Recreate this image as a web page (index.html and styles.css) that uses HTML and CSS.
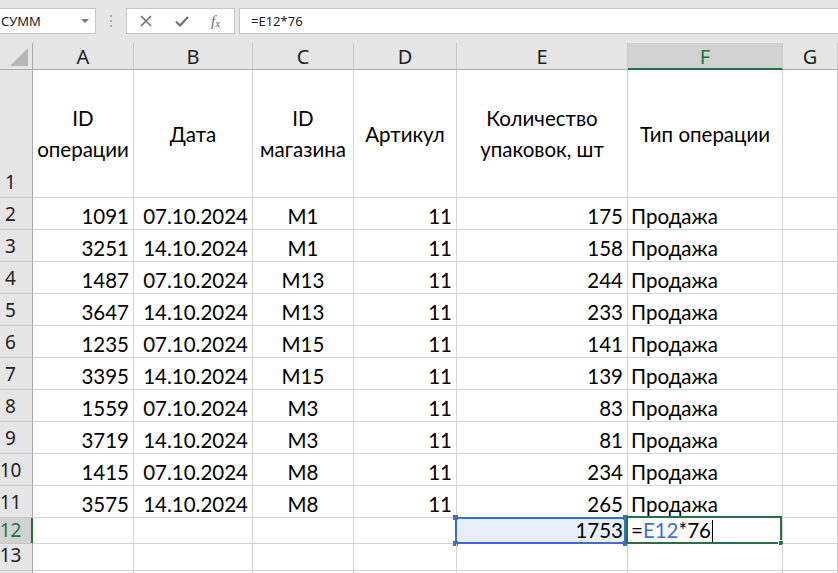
FILE: index.html
```html
<!DOCTYPE html>
<html lang="ru">
<head>
<meta charset="utf-8">
<title>Excel</title>
<link rel="stylesheet" href="styles.css">
</head>
<body>
<div class="toolbar">
  <div class="namebox"><span class="nb-text">СУММ</span><span class="nb-arrow"></span></div>
  <div class="grip"><i></i><i></i><i></i></div>
  <div class="fbtns">
    <svg class="ico" width="12" height="12" viewBox="0 0 12 12"><path d="M1 1 L11 11 M11 1 L1 11" stroke="#707070" stroke-width="1.6" fill="none"/></svg>
    <svg class="ico" width="14" height="11" viewBox="0 0 14 11"><path d="M1 5.5 L5 9.5 L13 1" stroke="#707070" stroke-width="2.2" fill="none"/></svg>
    <span class="fx">f<sub>x</sub></span>
  </div>
  <div class="formula">=E12*76</div>
</div>
<div class="sheet">
  <div class="corner"><span class="tri"></span></div>
  <div class="ch">A</div><div class="ch">B</div><div class="ch">C</div><div class="ch">D</div><div class="ch">E</div><div class="ch sel">F</div><div class="ch">G</div>

  <div class="rh top">1</div>
  <div class="c hd">ID<br>операции</div>
  <div class="c hd">Дата</div>
  <div class="c hd">ID<br>магазина</div>
  <div class="c hd">Артикул</div>
  <div class="c hd">Количество<br>упаковок, шт</div>
  <div class="c hd">Тип операции</div>
  <div class="c"></div>

  <div class="rh">2</div><div class="c r">1091</div><div class="c r">07.10.2024</div><div class="c m">М1</div><div class="c r">11</div><div class="c r">175</div><div class="c l">Продажа</div><div class="c"></div>
  <div class="rh">3</div><div class="c r">3251</div><div class="c r">14.10.2024</div><div class="c m">М1</div><div class="c r">11</div><div class="c r">158</div><div class="c l">Продажа</div><div class="c"></div>
  <div class="rh">4</div><div class="c r">1487</div><div class="c r">07.10.2024</div><div class="c m">М13</div><div class="c r">11</div><div class="c r">244</div><div class="c l">Продажа</div><div class="c"></div>
  <div class="rh">5</div><div class="c r">3647</div><div class="c r">14.10.2024</div><div class="c m">М13</div><div class="c r">11</div><div class="c r">233</div><div class="c l">Продажа</div><div class="c"></div>
  <div class="rh">6</div><div class="c r">1235</div><div class="c r">07.10.2024</div><div class="c m">М15</div><div class="c r">11</div><div class="c r">141</div><div class="c l">Продажа</div><div class="c"></div>
  <div class="rh">7</div><div class="c r">3395</div><div class="c r">14.10.2024</div><div class="c m">М15</div><div class="c r">11</div><div class="c r">139</div><div class="c l">Продажа</div><div class="c"></div>
  <div class="rh">8</div><div class="c r">1559</div><div class="c r">07.10.2024</div><div class="c m">М3</div><div class="c r">11</div><div class="c r">83</div><div class="c l">Продажа</div><div class="c"></div>
  <div class="rh">9</div><div class="c r">3719</div><div class="c r">14.10.2024</div><div class="c m">М3</div><div class="c r">11</div><div class="c r">81</div><div class="c l">Продажа</div><div class="c"></div>
  <div class="rh">10</div><div class="c r">1415</div><div class="c r">07.10.2024</div><div class="c m">М8</div><div class="c r">11</div><div class="c r">234</div><div class="c l">Продажа</div><div class="c"></div>
  <div class="rh">11</div><div class="c r">3575</div><div class="c r">14.10.2024</div><div class="c m">М8</div><div class="c r">11</div><div class="c r">265</div><div class="c l">Продажа</div><div class="c"></div>

  <div class="rh sel">12</div><div class="c"></div><div class="c"></div><div class="c"></div><div class="c"></div>
  <div class="c r ref">1753<span class="rng"><i class="h tl"></i><i class="h tr"></i><i class="h bl"></i><i class="h br"></i></span></div>
  <div class="c l act"><span class="eq">=</span><span class="refc">E12</span>*76<span class="caret"></span><span class="actbox"><i class="gh"></i></span></div>
  <div class="c"></div>

  <div class="rh">13</div><div class="c"></div><div class="c"></div><div class="c"></div><div class="c"></div><div class="c"></div><div class="c"></div><div class="c"></div>
  <div class="rh"></div><div class="c"></div><div class="c"></div><div class="c"></div><div class="c"></div><div class="c"></div><div class="c"></div><div class="c"></div>
</div>
</body>
</html>
```
FILE: styles.css
```css
* { box-sizing: border-box; }
html, body { margin: 0; padding: 0; }
body {
  width: 838px;
  height: 573px;
  overflow: hidden;
  background: #ffffff;
  font-family: "Lato", "Noto Sans", sans-serif;
  color: #000;
}

.toolbar {
  height: 43px;
  background: #e6e6e6;
  display: flex;
  align-items: flex-start;
  padding-top: 8px;
  font-family: "Noto Sans", "Open Sans", sans-serif;
  font-size: 13px;
  color: #222;
}
.namebox {
  width: 96px;
  height: 26px;
  background: #fff;
  border: 1px solid #c6c6c6;
  border-left: none;
  display: flex;
  align-items: center;
  justify-content: space-between;
  padding: 0 6px 0 1px;
}
.nb-arrow {
  width: 0; height: 0;
  border-left: 4px solid transparent;
  border-right: 4px solid transparent;
  border-top: 4px solid #777;
}
.grip {
  width: 30px;
  height: 26px;
  display: flex;
  flex-direction: column;
  align-items: center;
  justify-content: center;
  gap: 3px;
}
.grip i { width: 2px; height: 2px; background: #b0b0b0; display: block; }
.fbtns {
  width: 109px;
  height: 26px;
  background: #fff;
  border: 1px solid #c6c6c6;
  display: flex;
  align-items: center;
  padding-left: 13px;
  gap: 23px;
}
.fx {
  font-family: "Liberation Serif", "DejaVu Serif", serif;
  font-style: italic;
  font-size: 15px;
  color: #666;
  margin-left: -1px;
}
.fx sub { font-size: 11px; vertical-align: -1px; }
.formula {
  margin-left: 4px;
  flex: 1;
  height: 26px;
  background: #fff;
  border: 1px solid #c6c6c6;
  border-right: none;
  padding-left: 11px;
  line-height: 24px;
}

.sheet {
  display: grid;
  grid-template-columns: 33px 101px 119px 101px 103px 171px 155px 1fr;
  grid-template-rows: 27px 128px repeat(10, 32px) 26px 27px 30px;
}
.corner {
  background: #e6e6e6;
  border-right: 1px solid #ababab;
  border-bottom: 1px solid #ababab;
  position: relative;
}
.tri {
  position: absolute;
  left: 10px; top: 5px;
  width: 18px; height: 18px;
  background: #b7b7b7;
  clip-path: polygon(100% 0, 100% 100%, 0 100%);
}
.ch {
  background: #e6e6e6;
  border-right: 1px solid #c8c8c8;
  border-bottom: 1px solid #ababab;
  font-family: "Noto Sans", "Open Sans", sans-serif;
  font-size: 20px;
  color: #222;
  display: flex;
  align-items: center;
  justify-content: center;
  line-height: 1;
  padding-top: 1px;
}
.ch.sel {
  background: #d2d2d2;
  color: #217346;
  border-bottom-color: #217346;
  box-shadow: inset 0 -1px 0 #217346;
}
.rh {
  background: #e6e6e6;
  border-right: 1px solid #ababab;
  border-bottom: 1px solid #c8c8c8;
  font-family: "Noto Sans", "Open Sans", sans-serif;
  font-size: 19px;
  color: #222;
  display: flex;
  align-items: flex-end;
  justify-content: center;
  padding-right: 11px;
  padding-bottom: 2px;
  line-height: 26px;
  white-space: nowrap;
}
.rh.sel {
  background: #d2d2d2;
  color: #217346;
  border-right-color: #217346;
  box-shadow: inset -1px 0 0 #217346;
  line-height: 24px;
  padding-bottom: 1px;
}
.c {
  border-right: 1px solid #d4d4d4;
  border-bottom: 1px solid #d4d4d4;
  font-size: 20.5px;
  line-height: 26px;
  display: flex;
  align-items: flex-end;
  white-space: nowrap;
  position: relative;
}
.c.r { justify-content: flex-end; padding-right: 4px; }
.c.l { justify-content: flex-start; padding-left: 3px; }
.c.m { justify-content: center; }
.c.hd {
  align-items: center;
  justify-content: center;
  text-align: center;
  line-height: 31px;
  padding-top: 1px;
}

.ref { background: #e8eef9; }
.rng {
  position: absolute;
  left: -2px; top: -1px; right: 1px; bottom: -1px;
  border: 2px solid #3b6fc6;
}
.h {
  position: absolute;
  width: 5px; height: 5px;
  background: #3b6fc6;
}
.h.tl { left: -4px; top: -4px; }
.h.tr { right: -4px; top: -4px; }
.h.bl { left: -4px; bottom: -4px; }
.h.br { right: -4px; bottom: -4px; }

.act { background: #fff; }
.refc { color: #3f73c9; }
.caret {
  display: inline-block;
  width: 1px;
  height: 23px;
  background: #000;
  margin-left: 1px;
  align-self: flex-end;
  margin-bottom: 0;
}
.actbox {
  position: absolute;
  left: -2px; top: -2px; right: 0; bottom: -1px;
  border: 2px solid #217346;
}
.gh {
  position: absolute;
  right: -4px; bottom: -4px;
  width: 6px; height: 6px;
  background: #217346;
  border: 1px solid #fff;
}
```
